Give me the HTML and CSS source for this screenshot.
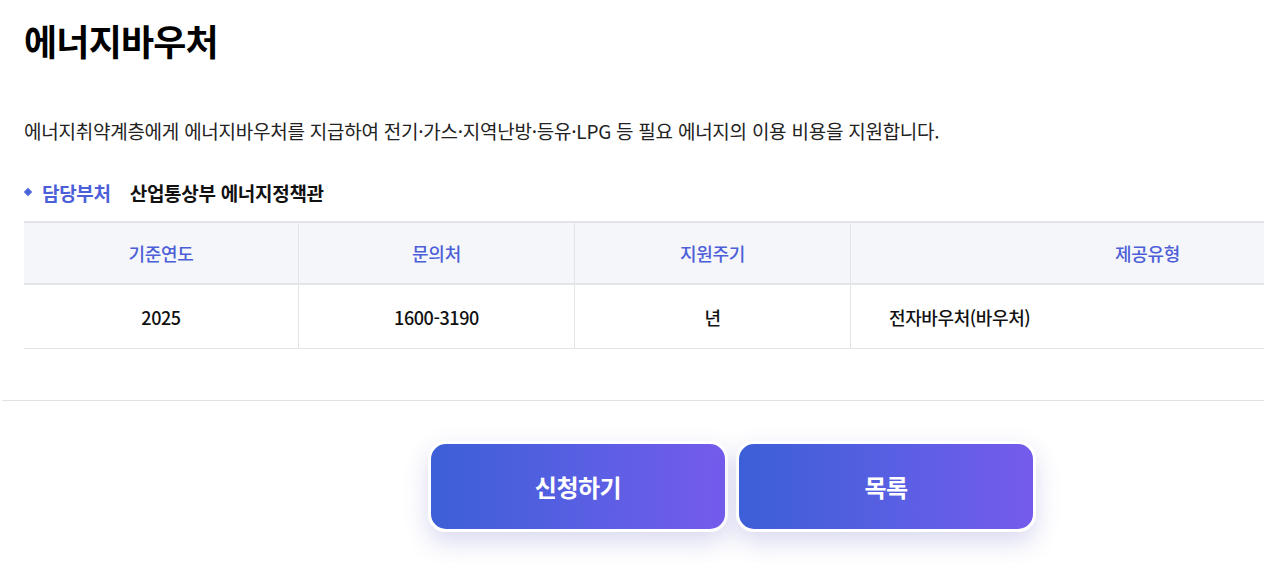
FILE: index.html
```html
<!DOCTYPE html>
<html lang="ko">
<head>
<meta charset="utf-8">
<title>에너지바우처</title>
<link rel="stylesheet" href="styles.css">
</head>
<body>
<div class="page">
  <div class="content">
    <h1 class="title">에너지바우처</h1>
    <p class="desc">에너지취약계층에게 에너지바우처를 지급하여 전기·가스·지역난방·등유·LPG 등 필요 에너지의 이용 비용을 지원합니다.</p>
    <div class="dept">
      <span class="dept-bullet"></span>
      <span class="dept-label">담당부처</span>
      <span class="dept-value">산업통상부 에너지정책관</span>
    </div>
    <table class="info">
      <thead>
        <tr>
          <th class="c1">기준연도</th>
          <th class="c2">문의처</th>
          <th class="c3">지원주기</th>
          <th class="c4">제공유형</th>
        </tr>
      </thead>
      <tbody>
        <tr>
          <td>2025</td>
          <td>1600-3190</td>
          <td>년</td>
          <td class="left">전자바우처(바우처)</td>
        </tr>
      </tbody>
    </table>
  </div>
  <hr class="divider">
  <div class="actions">
    <button class="btn">신청하기</button>
    <button class="btn">목록</button>
  </div>
</div>
</body>
</html>
```

FILE: styles.css
```css
html, body {
  margin: 0;
  padding: 0;
  background: #fff;
  overflow: hidden;
}
body {
  font-family: "Noto Sans CJK KR", "Noto Sans", sans-serif;
  color: #111;
}
.page {
  width: 1444px;
  padding-left: 2px;
  padding-bottom: 60px;
}
.content {
  padding: 0 0 0 22px;
}
.title {
  margin: 0;
  padding-top: 14px;
  font-size: 36px;
  font-weight: 700;
  letter-spacing: -0.8px;
  line-height: 52px;
  color: #000;
}
.desc {
  margin: 51px 0 0 0;
  font-size: 19px;
  line-height: 28px;
  letter-spacing: -0.25px;
  color: #222;
}
.dept {
  display: flex;
  align-items: center;
  margin-top: 33px;
  height: 28px;
  font-size: 19px;
  font-weight: 700;
  letter-spacing: -0.3px;
}
.dept-bullet {
  width: 6px;
  height: 6px;
  background: #4a63d8;
  transform: rotate(45deg);
  margin: 0 11px 0 1px;
}
.dept-label {
  color: #4b5fd9;
  margin-right: 19px;
}
.dept-value {
  color: #111;
}
.info {
  margin-top: 15px;
  width: 1420px;
  border-collapse: collapse;
  table-layout: fixed;
  font-size: 18px;
}
.info th {
  background: #f5f6fa;
  color: #4d5fd8;
  font-weight: 500;
  height: 60px;
  padding: 0;
  border-top: 2px solid #e3e4e8;
  border-bottom: 2px solid #e3e4e8;
  border-left: 1px solid #e3e4e8;
  letter-spacing: -0.3px;
}
.info th:first-child {
  border-left: none;
}
.info .c1 { width: 274px; }
.info .c2 { width: 275px; }
.info .c3 { width: 275px; }
.info td {
  height: 63px;
  padding: 0;
  text-align: center;
  font-weight: 500;
  color: #111;
  border-bottom: 1px solid #e3e4e8;
  border-left: 1px solid #e3e4e8;
  letter-spacing: -0.4px;
}
.info td:first-child {
  border-left: none;
}
.info td.left {
  text-align: left;
  padding-left: 38px;
}
.divider {
  margin: 51px 0 0 0;
  border: none;
  border-top: 1px solid #e2e2e2;
  height: 0;
}
.actions {
  display: flex;
  justify-content: center;
  gap: 8px;
  padding-top: 40px;
  padding-left: 16px;
}
.btn {
  width: 300px;
  height: 91px;
  border: 3px solid #fff;
  border-radius: 18px;
  background: linear-gradient(90deg, #3c5fd7 0%, #5a5fe3 55%, #755bec 100%);
  color: #fff;
  font-family: "Noto Sans CJK KR", "Noto Sans", sans-serif;
  font-size: 24px;
  font-weight: 700;
  letter-spacing: -0.5px;
  box-shadow: 0 10px 24px rgba(80, 80, 190, 0.22);
  cursor: pointer;
}
```
